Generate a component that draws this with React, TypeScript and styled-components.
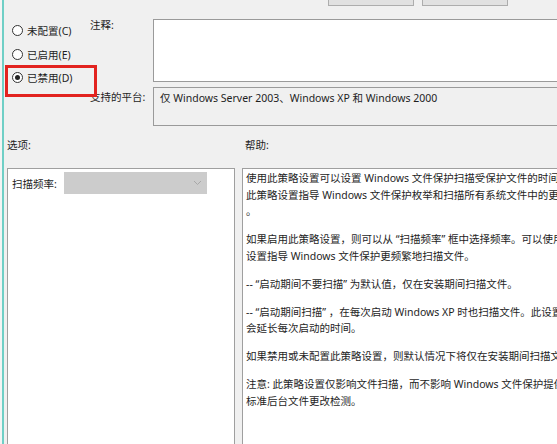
import React from 'react'
import styled, { createGlobalStyle } from 'styled-components'

const GlobalStyle = createGlobalStyle`
  html, body {
    margin: 0;
    padding: 0;
    background: #f4f4f4;
    overflow: hidden;
  }
  * { box-sizing: border-box; }
`

const Frame = styled.div`
  margin-left: 2px;
  width: 660px;
  height: 444px;
  overflow: hidden;
  border-left: 2px solid #6fcfc6;
  background: #f0f0f0;
  color: #1e1e1e;
  font-family: "Noto Sans", "Noto Sans CJK SC", sans-serif;
  font-size: 10.5px;
  display: flex;
  flex-direction: column;
`

const ButtonRow = styled.div`
  display: flex;
  gap: 8px;
  height: 6px;
  padding-left: 324px;
`

const TopButton = styled.div`
  width: 86px;
  height: 6px;
  background: #e1e1e1;
  border: 1px solid #adadad;
  border-top: none;
`

const Settings = styled.div`
  display: flex;
  margin-top: 13px;
`

const RadioGroup = styled.div`
  position: relative;
  width: 86px;
  padding-left: 8px;
  display: flex;
  flex-direction: column;
`

const RadioRow = styled.div`
  display: flex;
  align-items: center;
  gap: 4px;
  height: 23.5px;
  white-space: nowrap;
`

const Circle = styled.span<{ $checked?: boolean }>`
  width: 11px;
  height: 11px;
  border-radius: 50%;
  border: 1px solid #333;
  background: #fff;
  display: flex;
  align-items: center;
  justify-content: center;
  &::after {
    content: '';
    width: 5px;
    height: 5px;
    border-radius: 50%;
    background: ${p => (p.$checked ? '#222' : 'transparent')};
  }
`

const Highlight = styled.div`
  position: absolute;
  left: 1px;
  top: 46px;
  width: 92px;
  height: 32px;
  border: 3px solid #e2231f;
  z-index: 2;
`

const Fields = styled.div`
  flex: 1;
  display: grid;
  grid-template-columns: 63px 1fr;
  row-gap: 5px;
`

const FieldLabel = styled.div<{ $offset: number }>`
  padding-top: ${p => p.$offset}px;
  line-height: 12px;
  white-space: nowrap;
`

const TextBox = styled.div<{ $height: number; $readonly?: boolean }>`
  height: ${p => p.$height}px;
  border: 1px solid #9a9a9a;
  background: ${p => (p.$readonly ? '#f0f0f0' : '#ffffff')};
  padding: 4px 6px;
  line-height: 12px;
  white-space: nowrap;
`

const Lower = styled.div`
  display: grid;
  grid-template-columns: 228px 1fr;
  column-gap: 7px;
  row-gap: 15px;
  padding-left: 3px;
  margin-top: 11px;
`

const SectionLabel = styled.div<{ $indent?: number }>`
  line-height: 16px;
  padding-left: ${p => p.$indent ?? 0}px;
`

const Panel = styled.div`
  height: 320px;
  background: #ffffff;
  border: 1px solid #9f9f9f;
`

const OptionRow = styled.div`
  display: flex;
  align-items: center;
  padding: 3px 4px;
`

const OptionLabel = styled.span`
  width: 52px;
  white-space: nowrap;
`

const Select = styled.div`
  width: 143px;
  height: 22px;
  background: #cccccc;
  display: flex;
  align-items: center;
  justify-content: flex-end;
  padding-right: 5px;
`

const HelpPanel = styled(Panel)`
  padding: 1px 3px;
  overflow: hidden;
  white-space: nowrap;
`

const Para = styled.p`
  margin: 0 0 11.5px;
  line-height: 16.5px;
`

const help: string[][] = [
  [
    '使用此策略设置可以设置 Windows 文件保护扫描受保护文件的时间。',
    '此策略设置指导 Windows 文件保护枚举和扫描所有系统文件中的更改',
    '。',
  ],
  [
    '如果启用此策略设置，则可以从 “扫描频率” 框中选择频率。可以使用此',
    '设置指导 Windows 文件保护更频繁地扫描文件。',
  ],
  ['-- “启动期间不要扫描” 为默认值，仅在安装期间扫描文件。'],
  [
    '-- “启动期间扫描” ，在每次启动 Windows XP 时也扫描文件。此设置',
    '会延长每次启动的时间。',
  ],
  ['如果禁用或未配置此策略设置，则默认情况下将仅在安装期间扫描文件。'],
  [
    '注意: 此策略设置仅影响文件扫描，而不影响 Windows 文件保护提供的',
    '标准后台文件更改检测。',
  ],
]

const radios = [
  { label: '未配置(C)', checked: false },
  { label: '已启用(E)', checked: false },
  { label: '已禁用(D)', checked: true },
]

const App = () => {
  return (
    <>
      <GlobalStyle />
      <Frame>
        <ButtonRow>
          <TopButton />
          <TopButton />
        </ButtonRow>

        <Settings>
          <RadioGroup>
            {radios.map(r => (
              <RadioRow key={r.label}>
                <Circle $checked={r.checked} />
                {r.label}
              </RadioRow>
            ))}
            <Highlight />
          </RadioGroup>
          <Fields>
            <FieldLabel $offset={0}>注释:</FieldLabel>
            <TextBox $height={63} />
            <FieldLabel $offset={4}>支持的平台:</FieldLabel>
            <TextBox $height={39} $readonly>
              仅 Windows Server 2003、Windows XP 和 Windows 2000
            </TextBox>
          </Fields>
        </Settings>

        <Lower>
          <SectionLabel>选项:</SectionLabel>
          <SectionLabel $indent={3}>帮助:</SectionLabel>
          <Panel>
            <OptionRow>
              <OptionLabel>扫描频率:</OptionLabel>
              <Select>
                <svg width="9" height="6" viewBox="0 0 9 6">
                  <polyline points="1,1 4.5,4.5 8,1" fill="none" stroke="#a8a8a8" strokeWidth="1" />
                </svg>
              </Select>
            </OptionRow>
          </Panel>
          <HelpPanel>
            {help.map((lines, i) => (
              <Para key={i}>
                {lines.map((l, j) => (
                  <React.Fragment key={j}>
                    {j > 0 && <br />}
                    {l}
                  </React.Fragment>
                ))}
              </Para>
            ))}
          </HelpPanel>
        </Lower>
      </Frame>
    </>
  )
}

export default App
